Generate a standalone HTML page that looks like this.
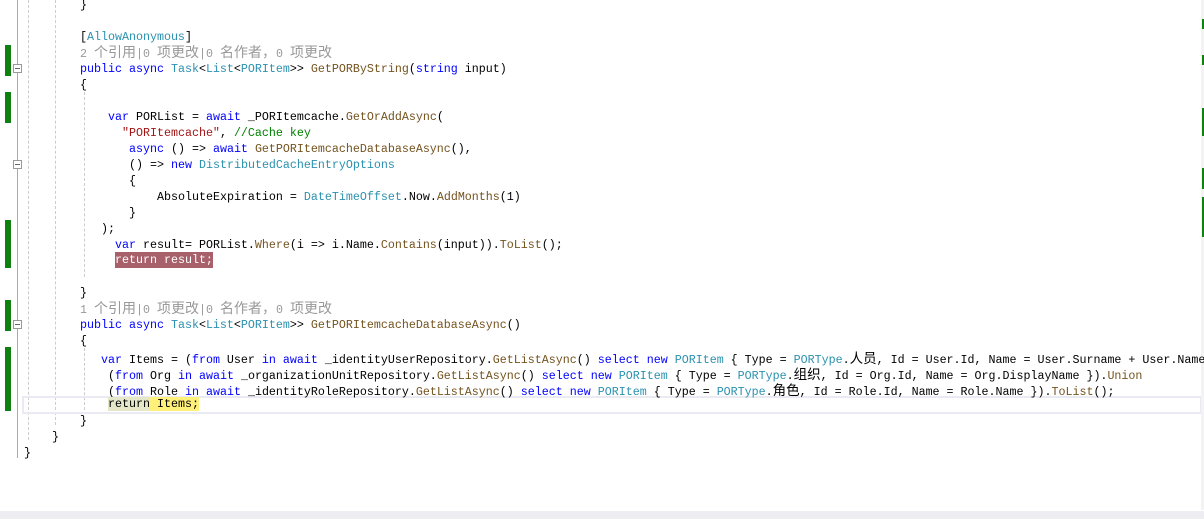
<!DOCTYPE html>
<html><head><meta charset="utf-8"><style>
body{margin:0;width:1204px;height:519px;background:#fff;position:relative;overflow:hidden;font-family:"Liberation Mono","NSimSun","Noto Sans CJK SC",monospace;font-size:11.67px;color:#000}
.l{position:absolute;white-space:pre;height:16px;line-height:16px}
.k{color:#0000ff}.t{color:#2b91af}.m{color:#74531f}.s{color:#a31515}.c{color:#008000}
.cl{color:#999;font-family:"Liberation Mono","Noto Sans CJK SC",sans-serif;font-size:11.67px}
.cj{font-family:"Noto Sans CJK SC",sans-serif;font-size:13.5px}
.cl .cj{font-size:14px}
.g{position:absolute;left:5px;width:6px;background:#108010}
.f{position:absolute;left:13px;width:7px;height:7px;border:1px solid #999;background:#fff}
.f:after{content:"";position:absolute;left:1px;top:3px;width:5px;height:1px;background:#666}
.dv{position:absolute;width:0;border-left:1px dashed #ccc}
</style></head><body>
<div class="g" style="top:45px;height:31px"></div>
<div class="g" style="top:92px;height:31px"></div>
<div class="g" style="top:220px;height:48px"></div>
<div class="g" style="top:300px;height:31px"></div>
<div class="g" style="top:347px;height:64px"></div>
<div style="position:absolute;left:17px;top:0;width:1px;height:458px;background:#aaa"></div>
<div class="f" style="top:64px"></div>
<div class="f" style="top:160px"></div>
<div class="f" style="top:320px"></div>
<div class="dv" style="left:28px;top:0;height:440px"></div>
<div class="dv" style="left:55px;top:0;height:425px"></div>
<div class="dv" style="left:84px;top:92px;height:185px"></div>
<div class="dv" style="left:84px;top:348px;height:62px"></div>
<div style="position:absolute;left:22px;top:396px;width:1176px;height:14px;border:2px solid #eaeaf2"></div>
<div style="position:absolute;left:1201px;top:0;width:3px;height:510px;background:#f3f3f3"></div>
<div style="position:absolute;left:1202px;top:19px;width:2px;height:10px;background:#108010"></div>
<div style="position:absolute;left:1202px;top:55px;width:2px;height:10px;background:#108010"></div>
<div style="position:absolute;left:1202px;top:108px;width:2px;height:28px;background:#108010"></div>
<div style="position:absolute;left:1202px;top:168px;width:2px;height:21px;background:#108010"></div>
<div style="position:absolute;left:1202px;top:197px;width:2px;height:40px;background:#108010"></div>
<div style="position:absolute;left:0;top:511px;width:1204px;height:8px;background:#eeeef2"></div>

<div class="l" style="left:80px;top:-3px">}</div>
<div class="l" style="left:80px;top:29px">[<span class="t">AllowAnonymous</span>]</div>
<div class="l cl" style="left:80px;top:44px">2 <span class="cj">个引用</span>|0 <span class="cj">项更改</span>|0 <span class="cj">名作者，</span>0 <span class="cj">项更改</span></div>
<div class="l" style="left:80px;top:61px"><span class="k">public async</span> <span class="t">Task</span>&lt;<span class="t">List</span>&lt;<span class="t">PORItem</span>&gt;&gt; <span class="m">GetPORByString</span>(<span class="k">string</span> input)</div>
<div class="l" style="left:80px;top:77px">{</div>
<div class="l" style="left:108px;top:109px"><span class="k">var</span> PORList = <span class="k">await</span> _PORItemcache.<span class="m">GetOrAddAsync</span>(</div>
<div class="l" style="left:122px;top:125px"><span class="s">"PORItemcache"</span>, <span class="c">//Cache key</span></div>
<div class="l" style="left:129px;top:141px"><span class="k">async</span> () =&gt; <span class="k">await</span> <span class="m">GetPORItemcacheDatabaseAsync</span>(),</div>
<div class="l" style="left:129px;top:157px">() =&gt; <span class="k">new</span> <span class="t">DistributedCacheEntryOptions</span></div>
<div class="l" style="left:129px;top:173px">{</div>
<div class="l" style="left:157px;top:189px">AbsoluteExpiration = <span class="t">DateTimeOffset</span>.Now.<span class="m">AddMonths</span>(1)</div>
<div class="l" style="left:129px;top:205px">}</div>
<div class="l" style="left:101px;top:221px">);</div>
<div class="l" style="left:115px;top:237px"><span class="k">var</span> result= PORList.<span class="m">Where</span>(i =&gt; i.Name.<span class="m">Contains</span>(input)).<span class="m">ToList</span>();</div>
<div class="l" style="left:115px;top:252px;background:#a8616a;color:#fff">return result;</div>
<div class="l" style="left:80px;top:285px">}</div>
<div class="l cl" style="left:80px;top:300px">1 <span class="cj">个引用</span>|0 <span class="cj">项更改</span>|0 <span class="cj">名作者，</span>0 <span class="cj">项更改</span></div>
<div class="l" style="left:80px;top:317px"><span class="k">public async</span> <span class="t">Task</span>&lt;<span class="t">List</span>&lt;<span class="t">PORItem</span>&gt;&gt; <span class="m">GetPORItemcacheDatabaseAsync</span>()</div>
<div class="l" style="left:80px;top:333px">{</div>
<div class="l" style="left:101px;top:349px"><span class="k">var</span> Items = (<span class="k">from</span> User <span class="k">in</span> <span class="k">await</span> _identityUserRepository.<span class="m">GetListAsync</span>() <span class="k">select</span> <span class="k">new</span> <span class="t">PORItem</span> { Type = <span class="t">PORType</span>.<span class="cj">人员</span>, Id = User.Id, Name = User.Surname + User.Name</div>
<div class="l" style="left:108px;top:365px">(<span class="k">from</span> Org <span class="k">in</span> <span class="k">await</span> _organizationUnitRepository.<span class="m">GetListAsync</span>() <span class="k">select</span> <span class="k">new</span> <span class="t">PORItem</span> { Type = <span class="t">PORType</span>.<span class="cj">组织</span>, Id = Org.Id, Name = Org.DisplayName }).<span class="m">Union</span></div>
<div class="l" style="left:108px;top:381px">(<span class="k">from</span> Role <span class="k">in</span> <span class="k">await</span> _identityRoleRepository.<span class="m">GetListAsync</span>() <span class="k">select</span> <span class="k">new</span> <span class="t">PORItem</span> { Type = <span class="t">PORType</span>.<span class="cj">角色</span>, Id = Role.Id, Name = Role.Name }).<span class="m">ToList</span>();</div>
<div class="l" style="left:108px;top:396px"><span style="background:#e6e6c8">return</span><span style="background:#fff07a"> Items;</span></div>
<div class="l" style="left:80px;top:413px">}</div>
<div class="l" style="left:52px;top:429px">}</div>
<div class="l" style="left:24px;top:445px">}</div>
</body></html>
